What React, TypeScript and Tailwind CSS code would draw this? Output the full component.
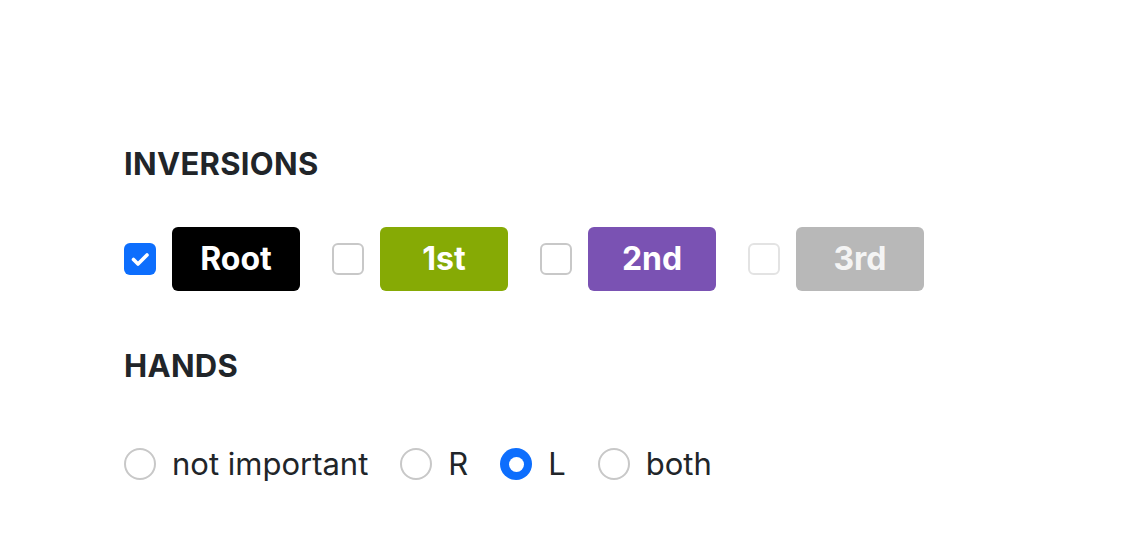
import { useState } from "react";

const inversions = [
  { key: "root", label: "Root", bg: "bg-black", text: "text-white", box: "border-[#c8c8c8]" },
  { key: "1st", label: "1st", bg: "bg-[#86aa05]", text: "text-white", box: "border-[#c8c8c8]" },
  { key: "2nd", label: "2nd", bg: "bg-[#7a52b3]", text: "text-white", box: "border-[#c8c8c8]" },
  { key: "3rd", label: "3rd", bg: "bg-[#b8b8b8]", text: "text-[#f4f4f4]", box: "border-[#e3e3e3]" },
];

const hands = ["not important", "R", "L", "both"];

function Checkbox({ checked, boxClass }: { checked: boolean; boxClass: string }) {
  if (checked) {
    return (
      <span className="block h-8 w-8 rounded-[6px] bg-[#0d6efd]">
        <svg viewBox="0 0 32 32" className="h-8 w-8" aria-hidden="true">
          <path d="M9.5 16.5l4.5 4.5L23 12" fill="none" stroke="white" strokeWidth="3.6" strokeLinecap="round" strokeLinejoin="round" />
        </svg>
      </span>
    );
  }
  return <span className={`block h-8 w-8 rounded-[6px] border-2 bg-white ${boxClass}`} />;
}

function Radio({ checked }: { checked: boolean }) {
  if (checked) {
    return (
      <span className="flex h-8 w-8 items-center justify-center rounded-full bg-[#0d6efd]">
        <span className="block h-[15px] w-[15px] rounded-full bg-white" />
      </span>
    );
  }
  return <span className="block h-8 w-8 rounded-full border-2 border-[#c8c8c8] bg-white" />;
}

export default function App() {
  const [checked] = useState<Record<string, boolean>>({ root: true });
  const [hand] = useState("L");

  return (
    <div className="min-h-[539px] w-full bg-white pl-[124px] pt-[144px] text-[#212529] [font-family:Inter,'Noto_Sans',sans-serif]">
      <h5 className="text-[31px] font-bold leading-[40px] tracking-[0.3px]">INVERSIONS</h5>

      <div className="mt-[43px] flex items-center gap-8">
        {inversions.map((inv) => (
          <label key={inv.key} className="flex items-center gap-4">
            <Checkbox checked={!!checked[inv.key]} boxClass={inv.box} />
            <span
              className={`flex h-16 w-32 items-center justify-center rounded-[6px] text-[32px] font-bold ${inv.bg} ${inv.text}`}
            >
              {inv.label}
            </span>
          </label>
        ))}
      </div>

      <h5 className="mt-[55px] text-[31px] font-bold leading-[40px] tracking-[0.3px]">HANDS</h5>

      <div className="mt-[62px] flex items-center gap-8">
        {hands.map((h) => (
          <label key={h} className="flex items-center gap-4">
            <Radio checked={hand === h} />
            <span className="text-[31px] leading-8">{h}</span>
          </label>
        ))}
      </div>
    </div>
  );
}
